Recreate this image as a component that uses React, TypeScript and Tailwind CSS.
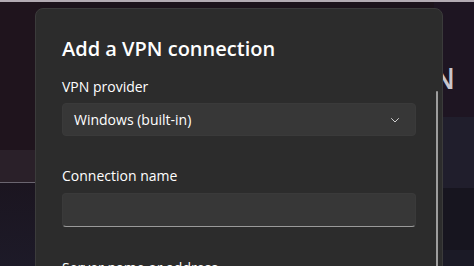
export default function App() {
  return (
    <div
      className="relative h-[266px] w-[474px] overflow-hidden bg-[#1c131b]"
      style={{ fontFamily: '"Open Sans", "Noto Sans", sans-serif' }}
    >
      {/* Background settings page */}
      <div className="h-[2px] bg-[#b3abb3]" />
      <div className="flex h-[264px]">
        {/* left column */}
        <div className="flex w-[40px] flex-col">
          <div className="h-[148px] bg-[#1f141d]" />
          <div className="h-[33px] border-b border-[#6a6570] bg-[#2a2029]" />
          <div className="flex-1 bg-gradient-to-b from-[#1b1520] to-[#1d1a28]" />
        </div>
        <div className="flex-1" />
        {/* right column */}
        <div className="flex w-[40px] flex-col">
          <div className="flex h-[115px] items-start justify-end bg-[#1e1522] pr-[19px] pt-[62px]">
            <span className="text-[28px] font-semibold leading-none text-[#c9c5cc]">VPN</span>
          </div>
          <div className="h-[71px] bg-[#201e2c]" />
          <div className="h-[62px] bg-[#17151f]" />
          <div className="flex-1 bg-[#1b1a26]" />
        </div>
      </div>

      {/* Dialog */}
      <div className="absolute left-[35px] top-[8px] h-[270px] w-[408px] rounded-t-[8px] border border-[#3b3b3b] bg-[#2c2c2c]">
        <div className="relative flex flex-col pl-[26px] pr-[26px] pt-[26px]">
          <h1 className="text-[20px] font-semibold leading-[28px] text-white">Add a VPN connection</h1>

          <label className="mt-[14px] text-[14px] leading-[20px] text-white">VPN provider</label>
          <div className="mt-[6px] flex h-[33px] items-center justify-between rounded-[4px] border border-[#3a3a3a] bg-[#373737] pl-[11px] pr-[14px]">
            <span className="text-[14px] text-white">Windows (built-in)</span>
            <svg width="12" height="12" viewBox="0 0 12 12" fill="none">
              <path d="M2.5 4.5 6 8l3.5-3.5" stroke="#d0d0d0" strokeWidth="1" strokeLinecap="round" strokeLinejoin="round" />
            </svg>
          </div>

          <label className="mt-[30px] text-[14px] leading-[20px] text-white">Connection name</label>
          <div className="mt-[7px] h-[34px] rounded-[4px] border border-[#3a3a3a] border-b-[#9a9a9a] bg-[#373737]" />

          <label className="mt-[31px] text-[14px] leading-[20px] text-white">Server name or address</label>

          {/* scrollbar */}
          <div className="absolute right-[4px] top-[82px] h-[200px] w-[2px] rounded-full bg-[#9e9e9e]" />
        </div>
      </div>
    </div>
  );
}
